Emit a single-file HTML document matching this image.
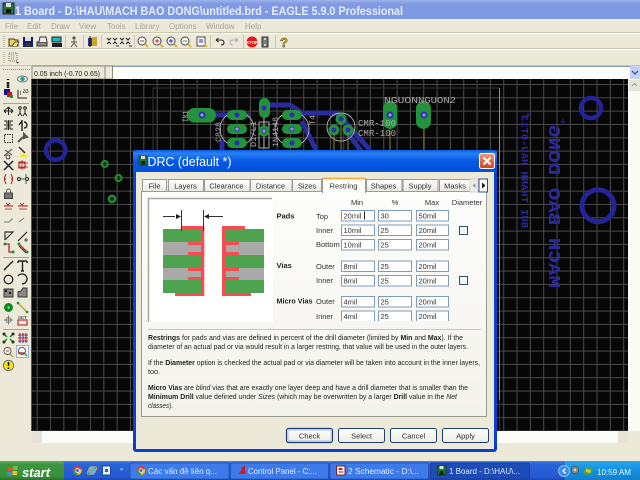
<!DOCTYPE html>
<html><head><meta charset="utf-8"><title>EAGLE DRC</title>
<style>html,body{margin:0;padding:0;width:640px;height:480px;overflow:hidden;background:#ece9d8}svg{display:block;filter:blur(.25px)}
text{font-family:"Liberation Sans","Noto Sans CJK SC",sans-serif}</style></head><body>
<svg xmlns="http://www.w3.org/2000/svg" width="640" height="480" viewBox="0 0 640 480">
<defs>
<linearGradient id="tb" x1="0" y1="0" x2="0" y2="1"><stop offset="0" stop-color="#9db5ec"/><stop offset=".2" stop-color="#8199e2"/><stop offset="1" stop-color="#7d9ae2"/></linearGradient>
<linearGradient id="dt" x1="0" y1="0" x2="0" y2="1"><stop offset="0" stop-color="#0a5ce8"/><stop offset=".15" stop-color="#2a80f5"/><stop offset=".5" stop-color="#0658e4"/><stop offset="1" stop-color="#0350d8"/></linearGradient>
<linearGradient id="task" x1="0" y1="0" x2="0" y2="1"><stop offset="0" stop-color="#3f86ea"/><stop offset=".15" stop-color="#2a63d8"/><stop offset=".85" stop-color="#2459d0"/><stop offset="1" stop-color="#1c47ad"/></linearGradient>
<linearGradient id="tray" x1="0" y1="0" x2="0" y2="1"><stop offset="0" stop-color="#28a5ee"/><stop offset=".5" stop-color="#1490df"/><stop offset="1" stop-color="#1280cc"/></linearGradient>
<linearGradient id="start" x1="0" y1="0" x2="0" y2="1"><stop offset="0" stop-color="#5fae5c"/><stop offset=".2" stop-color="#3c943c"/><stop offset=".8" stop-color="#3a933c"/><stop offset="1" stop-color="#2b6e2d"/></linearGradient>
<linearGradient id="tabg" x1="0" y1="0" x2="0" y2="1"><stop offset="0" stop-color="#fff"/><stop offset="1" stop-color="#e8e7df"/></linearGradient>
<linearGradient id="panel" x1="0" y1="0" x2="0" y2="1"><stop offset="0" stop-color="#fdfdfb"/><stop offset="1" stop-color="#f3f2ec"/></linearGradient>
<linearGradient id="btn" x1="0" y1="0" x2="0" y2="1"><stop offset="0" stop-color="#fff"/><stop offset="1" stop-color="#ecebe3"/></linearGradient>
<linearGradient id="cl" x1="0" y1="0" x2="0" y2="1"><stop offset="0" stop-color="#ee9a7c"/><stop offset="1" stop-color="#d2421a"/></linearGradient>
<pattern id="grid" width="13.33" height="13.33" patternUnits="userSpaceOnUse" x="10" y="4">
<rect width="13.33" height="13.33" fill="#070707"/><path d="M0 .5H13.33M.5 0V13.33" stroke="#4a4a4a" stroke-width="1" fill="none"/></pattern>
<clipPath id="cv"><rect x="31" y="79" width="597" height="352"/></clipPath>
<clipPath id="fc"><rect x="142" y="195" width="345" height="126"/></clipPath>
</defs>

<rect width="640" height="480" fill="#ece9d8"/>
<!-- main title -->
<rect width="640" height="19" fill="url(#tb)"/>
<rect x="3" y="3" width="11" height="11" fill="#1f7a2c" stroke="#222"/><rect x="6" y="3" width="5" height="4" fill="#ddd"/><rect x="6" y="9" width="5" height="4" fill="#111"/>
<text x="15" y="15" font-size="11.5" font-weight="bold" fill="#e4ebfa" textLength="388" lengthAdjust="spacingAndGlyphs">1 Board - D:\HAU\MACH BAO DONG\untitled.brd - EAGLE 5.9.0 Professional</text>
<!-- menu -->
<g font-size="8" fill="#a8a598">
<text x="5" y="29">File</text><text x="27" y="29">Edit</text><text x="51" y="29">Draw</text><text x="79" y="29">View</text><text x="107" y="29">Tools</text><text x="135" y="29">Library</text><text x="169" y="29">Options</text><text x="206" y="29">Window</text><text x="245" y="29">Help</text>
</g>
<path d="M0 33.500H640M0 49.500H640" stroke="#fff"/><path d="M0 32.500H640M0 48.500H640M0 65.500H640" stroke="#c9c6b4"/>
<!-- toolbar icons -->
<g>
<path d="M4 36v11M4 52v11" stroke="#99967f" stroke-dasharray="1 1"/>
<path d="M9 39h5l1 1h3v6H9z" fill="#e8d050" stroke="#333"/><path d="M12 46l3-4h4l-2 4" fill="#f5e878" stroke="#333" stroke-width=".7"/>
<rect x="23" y="37" width="10" height="10" fill="#101c70"/><rect x="25" y="37" width="6" height="4" fill="#ddd"/><rect x="25" y="43" width="6" height="4" fill="#333"/>
<path d="M37 42h10v4H37z" fill="#888" stroke="#333"/><path d="M39 42l1-5h6l1 5" fill="#eee" stroke="#333"/>
<rect x="52" y="37" width="9" height="5" fill="#19b8c8" stroke="#222"/><rect x="52" y="43" width="10" height="4" fill="#222"/>
<path d="M65.500 35v14" stroke="#c9c6b4"/>
<circle cx="74" cy="38" r="1.600" fill="#555"/><path d="M74 40v3l-3 4M74 43l3 4M71 42h6" stroke="#555" fill="none"/>
<path d="M83.500 35v14M101.500 35v14" stroke="#c9c6b4"/>
<rect x="88" y="38" width="9" height="8" fill="#2a3a9a"/><rect x="92" y="37" width="5" height="9" fill="#caa520"/><path d="M90 36v11" stroke="#111"/>
<g fill="none" stroke="#222"><path d="M107 38l2 2 2-2M113 38l2 2 2-2M107 44l2-2 2 2M113 44l2-2 2 2" /><path d="M120 38l2 2 2-2M126 38l2 2 2-2M120 44l2-2 2 2M126 44l2-2 2 2"/></g>
<path d="M116 46h3M129 46h3" stroke="#333"/>
<path d="M134.500 35v14" stroke="#c9c6b4"/>
<g fill="#fff" stroke="#444"><circle cx="142" cy="41" r="4"/><circle cx="157" cy="41" r="4"/><circle cx="171" cy="41" r="4"/><circle cx="185" cy="41" r="4"/><rect x="197" y="37" width="8" height="9"/></g>
<g stroke="#d8b440" stroke-width="2"><path d="M145 44l3 3M160 44l3 3M174 44l3 3M188 44l3 3M204 44l3 3"/></g>
<path d="M140 41h4M155 41h4M157 39v4" stroke="#c22"/><path d="M169 41h4M171 39v4" stroke="#22c"/><path d="M183 41h4" stroke="#2a2"/><path d="M199 40h4M199 42h4" stroke="#22a"/>
<path d="M210.500 35v14M243.500 35v14M275.500 35v14" stroke="#c9c6b4"/>
<path d="M216 40h5q3 0 3 2.500t-3 2.500M216 40l2.500-2M216 40l2.500 2" stroke="#222" fill="none"/>
<path d="M238 40h-5q-3 0-3 2.500t3 2.500M238 40l-2.500-2M238 40l-2.500 2" stroke="#aaa" fill="none"/>
<circle cx="252" cy="42" r="5.500" fill="#e01818"/><text x="252" y="44" font-size="4.500" font-weight="bold" fill="#fff" text-anchor="middle">STOP</text>
<rect x="262" y="37" width="6" height="10" fill="#777" stroke="#333"/><circle cx="265" cy="39" r="1" fill="#eee"/><circle cx="265" cy="42" r="1" fill="#4b4"/><circle cx="265" cy="45" r="1" fill="#eee"/>
<text x="284" y="47" font-size="13" font-weight="bold" fill="#e0c000" stroke="#222" stroke-width=".4" text-anchor="middle">?</text>
<rect x="9" y="53" width="8" height="8" fill="none" stroke="#666" stroke-dasharray="1 1"/><path d="M11 55h4M11 57h4M11 59h4" stroke="#888" stroke-dasharray="1 1"/><path d="M16 62h3l-1.500 1.500z" fill="#222"/>
</g>
<!-- coordinate row -->
<path d="M3 69.500h27" stroke="#99967f" stroke-dasharray="1 1"/>
<rect x="32" y="66" width="73" height="13" fill="#ece9d8" stroke="#8e8b78"/>
<text x="34" y="76" font-size="7.500" fill="#222" textLength="66" lengthAdjust="spacingAndGlyphs">0.05 inch (-0.70 0.65)</text>
<rect x="105" y="66" width="7.500" height="13" fill="#ece9d8" stroke="#8e8b78"/>
<rect x="113" y="66" width="517" height="13" fill="#fff"/><path d="M113 66.500H630" stroke="#7f9db9"/>
<rect x="630" y="66" width="10" height="13" fill="#c3d2f5"/><path d="M632 71l3 3 3-3" stroke="#3a5aa0" fill="none" stroke-width="1.300"/>

<!-- canvas -->
<rect x="31" y="79" width="597" height="352" fill="url(#grid)"/>
<g clip-path="url(#cv)">
<rect x="153" y="88" width="346.500" height="400" fill="none" stroke="#333"/><path d="M499.500 88V400" stroke="#8e8e8e"/>
<!-- traces -->
<g fill="none" stroke="#2b2b9c" stroke-width="5" stroke-linejoin="round">
<path d="M202 115H250"/><path d="M264 108L270 105H290L302 113H337L370 150"/><path d="M302 121L316 150"/><path d="M222 140V152"/><path d="M345 130L362 152"/>
</g>
<!-- mounting circles -->
<g fill="none" stroke="#24249a"><circle cx="55.700" cy="150" r="9.700" stroke-width="4.500"/><circle cx="591" cy="108" r="10" stroke-width="4.500"/><circle cx="598" cy="205.700" r="16" stroke-width="5"/></g>
<g fill="none" stroke="#1f8a2c"><circle cx="104.700" cy="164" r="3" stroke-width="2.200"/><circle cx="118.500" cy="178" r="3" stroke-width="2.200"/><circle cx="112" cy="199" r="3" stroke-width="2.800"/></g>
<!-- outlines -->
<g fill="none" stroke="#b8b8b8" stroke-width=".9"><circle cx="237" cy="129" r="17"/><circle cx="292" cy="129" r="17"/><circle cx="341" cy="127" r="14"/><rect x="259" y="122" width="10" height="26"/><path d="M264 112v36"/></g>
<g stroke="#8a8140"><path d="M334 134V152M348 134V152M424 128V152M390 128V152M341 122V152" fill="none"/></g>
<!-- pads -->
<g fill="#23923a">
<rect x="187" y="108" width="29" height="14.600" rx="7.300"/>
<rect x="227" y="110" width="20" height="10" rx="5"/><rect x="227" y="124" width="20" height="10" rx="5"/><rect x="227" y="138" width="20" height="10" rx="5"/>
<rect x="282" y="110" width="20" height="10" rx="5"/><rect x="282" y="124" width="20" height="10" rx="5"/><rect x="282" y="138" width="20" height="10" rx="5"/>
<rect x="259" y="98" width="11" height="20" rx="5.500"/><circle cx="264" cy="131" r="5.500"/>
<circle cx="341" cy="119" r="5.500"/><circle cx="334" cy="130" r="5.500"/><circle cx="348" cy="130" r="5.500"/>
<rect x="383" y="101" width="14" height="28" rx="7"/><rect x="416" y="101" width="15" height="28" rx="7.500"/>
</g>
<g fill="#2c2cb8"><circle cx="202" cy="115" r="3.500"/><circle cx="237" cy="115" r="2.500"/><circle cx="237" cy="129" r="2.500"/><circle cx="237" cy="143" r="2.500"/><circle cx="292" cy="115" r="2.500"/><circle cx="292" cy="129" r="2.500"/><circle cx="292" cy="143" r="2.500"/><circle cx="264" cy="108" r="2.500"/><circle cx="264" cy="131" r="2.500"/><circle cx="341" cy="119" r="2.500"/><circle cx="334" cy="130" r="2.500"/><circle cx="348" cy="130" r="2.500"/><circle cx="390" cy="115" r="3.500"/><circle cx="424" cy="115" r="3.500"/></g>
<path d="M200 115h4M202 113v4M235 129h4M237 127v4M290 129h4M292 127v4M388 115h4M390 113v4M422 115h4M424 113v4M262 131h4M264 129v4" stroke="#ddd" stroke-width=".7"/>
<!-- pcb text -->
<g fill="#a8a8a8" font-size="9">
<text x="384" y="103" textLength="34" lengthAdjust="spacingAndGlyphs" style="font-family:'Liberation Mono',monospace">NGUON</text>
<text x="418" y="103" textLength="38" lengthAdjust="spacingAndGlyphs" style="font-family:'Liberation Mono',monospace">NGUON2</text>
<text x="358" y="126" textLength="38" lengthAdjust="spacingAndGlyphs" style="font-family:'Liberation Mono',monospace">CMR-100</text>
<text x="358" y="136" textLength="38" lengthAdjust="spacingAndGlyphs" style="font-family:'Liberation Mono',monospace">CMR-100</text>
<text transform="translate(188,122) rotate(-90)" font-size="8" textLength="11" lengthAdjust="spacingAndGlyphs" style="font-family:'Liberation Mono',monospace">IN1</text>
<text transform="translate(221,142) rotate(-90)" font-size="8" textLength="20" lengthAdjust="spacingAndGlyphs" style="font-family:'Liberation Mono',monospace">C828</text>
<text transform="translate(256,147) rotate(-90)" font-size="8" textLength="26" lengthAdjust="spacingAndGlyphs" style="font-family:'Liberation Mono',monospace">D1/L1</text>
<text transform="translate(278,147) rotate(-90)" font-size="8" textLength="30" lengthAdjust="spacingAndGlyphs" style="font-family:'Liberation Mono',monospace">1N4148</text>
<text transform="translate(315,125) rotate(-90)" font-size="8" textLength="10" lengthAdjust="spacingAndGlyphs" style="font-family:'Liberation Mono',monospace">T4</text>
</g>
<g fill="#2a2a9c" font-weight="bold">
<text transform="translate(549,288) rotate(-90) scale(1,-1)" font-size="17" textLength="163" lengthAdjust="spacingAndGlyphs" style="font-family:'Liberation Mono',monospace">MACH BAO DONG</text>
<text transform="translate(521.500,228) rotate(-90) scale(1,-1)" font-size="10" textLength="113" lengthAdjust="spacingAndGlyphs" style="font-family:'Liberation Mono',monospace">BUI THANH HAU-0T13</text>
</g>
<path d="M528 112v6M525 115h6M563 119v6M560 122h6" stroke="#2a2a9c" stroke-width=".7"/>
</g>
<!-- left toolbar -->
<rect x="0" y="66" width="31" height="395" fill="#ece9d8"/><rect x="31" y="79" width="1" height="352" fill="#555"/>
<path d="M3 69.500h27" stroke="#99967f" stroke-dasharray="1 1"/>
<path d="M3 103.500h26M3 257.500h26M3 329.500h26" stroke="#a9a692"/>
<g fill="none" stroke="#222" stroke-width="1">
<path d="M8 79v1M8 82v6" stroke-width="2.500"/>
<ellipse cx="22.500" cy="79" rx="5" ry="3" stroke="#777"/><circle cx="22.500" cy="79" r="1.700" fill="#14a8a0" stroke="#14a8a0"/>
<rect x="4" y="89" width="6" height="6" fill="#101090" stroke="none"/><rect x="7" y="92" width="5" height="5" fill="#c01818" stroke="none"/><rect x="10" y="95" width="3" height="3" fill="#189028" stroke="none"/>
<path d="M18 90v8h9M20 92h1M23 92h1M20 94h1" /><text x="23" y="93" font-size="5" fill="#222" stroke="none">33</text>
<path d="M4 111h9M8.500 107v8M4 111l2-2M4 111l2 2M13 111l-2-2M13 111l-2 2M8.500 107l-2 2M8.500 107l2 2"/>
<circle cx="20" cy="108" r="1.300"/><circle cx="25" cy="108" r="1.300"/><path d="M20 110v3l-2 3M20 113l2 3M25 110v3l-2 3M25 113l2 3"/>
<path d="M4 121h3v8H4M4 125h2M13 121h-3v8h3M13 125h-2M8.500 120v10"/>
<path d="M22 120v11M19 125l3-4M24 122a3 3 0 0 1 0 6" stroke-width="1.400"/>
<rect x="4.500" y="134.500" width="8" height="8" stroke-dasharray="1.500 1"/>
<path d="M18 142l5-5M24 134l3 3-3 1z" stroke-width="2" stroke="#555"/>
<path d="M4 156l8-7M5 150l7 5M6 157a2 2 0 1 0 0-.1" stroke="#444"/>
<path d="M19 147l6 6" stroke="#333" stroke-width="1.500"/><path d="M19 157h9l-4-4z" fill="#f5e030" stroke="none"/>
<path d="M4 161l9 9M13 161l-9 9" stroke-width="1.500"/>
<rect x="19" y="162" width="6" height="6" stroke="#b01818"/><path d="M18 163h10M18 167h10M22 160v10" stroke="#b01818" stroke-width=".7"/>
<path d="M6 174q-3 5 0 10M11 174q3 5 0 10M4 179h2M11 179h2" stroke="#a01818"/>
<circle cx="19" cy="179" r="1.500"/><circle cx="27" cy="179" r="1.500"/><path d="M20 179h6M26 174v4M26 180v4" stroke="#1a7a2a"/>
<rect x="4.500" y="193" width="8" height="5.500" fill="#777" stroke="#444"/><path d="M6.500 193v-2a2 2 0 0 1 4 0v2" stroke="#666"/>
<path d="M4 206h9M18 206h10" stroke="#a01818"/><path d="M6 203l2 2 2-2M20 203l2 2 2-2M5 209h7M19 209h8" stroke="#a01818" stroke-width=".8"/>
<path d="M4 222h5l3-3h1M19 222l5-4" stroke="#777"/>
<path d="M5 240v-8h8L5 240" stroke-width="1.200" stroke="#333"/><path d="M18 241l9-9" stroke-width="1.200"/><path d="M26 238v4M24 240h4" stroke-width=".8"/>
<path d="M5 244h4v8l5 0" stroke="#d02020" stroke-width="1.300"/><circle cx="5" cy="244" r="1.500" fill="#1a9030" stroke="none"/><circle cx="13" cy="252" r="1.500" fill="#1a9030" stroke="none"/>
<path d="M19 244l8 8" stroke="#d02020" stroke-width="1.300"/><path d="M19 246l7 7" stroke="#333"/><circle cx="19" cy="244" r="1.500" fill="#1a9030" stroke="none"/><circle cx="27" cy="252" r="1.500" fill="#1a9030" stroke="none"/>
<path d="M4 270l9-9" stroke-width="1.400"/>
<path d="M18 261h9M22.500 261v10M21 271h3M18 261v2M27 261v2" stroke-width="1.400"/>
<circle cx="8.500" cy="279.500" r="4.300" stroke-width="1.300"/>
<path d="M18 276a5 5 0 1 1 4 8" stroke-width="1.300"/>
<rect x="4" y="289" width="9" height="8" fill="#8a8a8a" stroke="#333"/><circle cx="6" cy="291" r=".7" fill="#222"/><circle cx="10" cy="293" r=".7" fill="#222"/>
<path d="M18 297v-5l3-1 2-3h4v9z" fill="#888" stroke="#333"/>
<circle cx="8.500" cy="307.500" r="4.500" fill="#0a8a1e" stroke="none"/><circle cx="8.500" cy="307.500" r="1" fill="#dfd" stroke="none"/>
<path d="M18 303l9 9" stroke="#c0a020" stroke-width="1.300"/><circle cx="18" cy="303" r="1.300" fill="#1a9030" stroke="none"/><circle cx="27" cy="312" r="1.300" fill="#1a9030" stroke="none"/>
<circle cx="8.500" cy="320" r="2.500" stroke="#777"/><path d="M4 320h9M8.500 315.500v9" stroke="#777"/>
<rect x="18" y="320" width="9" height="5" stroke="#a01818"/><text x="18" y="319" font-size="4.500" fill="#222" stroke="none">SET</text>
<path d="M4 334l3 3M13 334l-3 3M4 342l3-3M13 342l-3-3" stroke="#14902a" stroke-width="1.500"/><circle cx="4" cy="334" r="1" fill="#14902a"/><circle cx="13" cy="342" r="1" fill="#14902a"/><circle cx="13" cy="334" r="1" fill="#14902a"/><circle cx="4" cy="342" r="1" fill="#14902a"/>
<path d="M20 333v10M23 333v10M26 333v10" stroke="#2030b0"/><path d="M18 335h10M18 338h10M18 341h10" stroke="#c02020"/>
<circle cx="7.500" cy="351" r="3.500" fill="#fff" stroke="#555"/><path d="M10 354l3 3" stroke="#c0a040" stroke-width="1.500"/><path d="M6 351h3" stroke="#c22"/>
<rect x="16.500" y="345.500" width="12" height="12" fill="#f7f6ef" stroke="#9db0d8"/><circle cx="22" cy="351" r="3.500" fill="#fff" stroke="#555"/><path d="M18 353h7" stroke="#a01818" stroke-width="1.200"/><path d="M25 354l2 2" stroke="#3a9a3a" stroke-width="1.500"/>
<circle cx="8.500" cy="365.500" r="5.200" fill="#f0e020" stroke="#666" stroke-width=".8"/><path d="M8.500 362v4M8.500 367.500v1.500" stroke="#111" stroke-width="1.500"/>
</g>
<!-- right scrollbar -->
<rect x="628" y="79" width="12" height="352" fill="#fafaf6"/>
<rect x="629" y="80" width="11" height="11" fill="#e6e4d6"/><path d="M632 86l2.500-2.500 2.500 2.500" stroke="#9c9c92" fill="none"/>
<rect x="628" y="431" width="12" height="12" fill="#ece9d8"/>
<!-- bottom scrollbar -->
<rect x="32" y="431" width="596" height="12" fill="#fbfbf8"/>
<rect x="32" y="431" width="10" height="12" fill="#e6e4d6"/><rect x="618" y="431" width="10" height="12" fill="#e6e4d6"/>
<rect x="32" y="443" width="608" height="18" fill="#ece9d8"/>

<!-- dialog -->
<rect x="133" y="150" width="364" height="302" rx="3" fill="#0a3fd4"/>
<rect x="133" y="150" width="364" height="23" rx="3" fill="url(#dt)"/>
<rect x="136" y="172" width="358" height="277" fill="#ece9d8"/>
<rect x="139" y="156" width="8" height="9" fill="#1a7a2a" stroke="#222" stroke-width=".6"/><rect x="141" y="156" width="4" height="3" fill="#ddd"/><rect x="141" y="161" width="4" height="4" fill="#222"/>
<text x="147.500" y="166" font-size="12.500" fill="#fff" textLength="84" lengthAdjust="spacingAndGlyphs">DRC (default *)</text>
<rect x="479.500" y="153.500" width="15" height="15" rx="2" fill="url(#cl)" stroke="#fff"/><path d="M483.500 157.500l7 7M490.500 157.500l-7 7" stroke="#fff" stroke-width="2"/>
<!-- panel -->
<rect x="141.500" y="191.500" width="345" height="225" fill="url(#panel)" stroke="#9c9b91"/>
<!-- tabs -->
<g fill="url(#tabg)" stroke="#9c9b91">
<rect x="142.500" y="179.500" width="24" height="12"/><rect x="168.500" y="179.500" width="35" height="12"/><rect x="204.500" y="179.500" width="45.500" height="12"/><rect x="250.500" y="179.500" width="41.500" height="12"/><rect x="292.500" y="179.500" width="29" height="12"/><rect x="366.500" y="179.500" width="35.500" height="12"/><rect x="403" y="179.500" width="35" height="12"/><rect x="439.500" y="179.500" width="31" height="12"/>
</g>
<rect x="322.500" y="178.500" width="43" height="14" fill="#fdfdfb" stroke="#9c9b91"/><path d="M323 178.500h42" stroke="#f0a830" stroke-width="1.600"/><path d="M323 192.500h42" stroke="#fdfdfb" stroke-width="1.500"/>
<g font-size="7.500" fill="#333" text-anchor="middle">
<text x="154.500" y="188.500">File</text><text x="185.500" y="188.500">Layers</text><text x="226.500" y="188.500">Clearance</text><text x="270.500" y="188.500">Distance</text><text x="307" y="188.500">Sizes</text><text x="343.500" y="188.500">Restring</text><text x="383.500" y="188.500">Shapes</text><text x="420" y="188.500">Supply</text><text x="455" y="188.500">Masks</text>
</g>
<rect x="470" y="179" width="8" height="13" fill="#eeede6" stroke="#c8c7bd" stroke-width=".7"/><path d="M475.500 183v5l-3-2.500z" fill="#999"/>
<rect x="479" y="179" width="8.500" height="13" fill="#fff" stroke="#24509a"/><path d="M482 182.500v6l3.500-3z" fill="#111"/>
<!-- image -->
<rect x="148" y="198" width="125" height="124" fill="#fff"/><path d="M148.500 322V198.500H272" fill="none" stroke="#aaa89e" stroke-width="1.500"/>
<g fill="#4ea34e"><rect x="163" y="229" width="38" height="13"/><rect x="163" y="255" width="38" height="13"/><rect x="163" y="280" width="38" height="13"/><rect x="226" y="229" width="38" height="13"/><rect x="226" y="255" width="38" height="13"/><rect x="226" y="280" width="38" height="13"/></g>
<g fill="#a9a9a9"><rect x="163" y="242" width="38" height="13"/><rect x="163" y="268" width="38" height="12"/><rect x="226" y="242" width="38" height="13"/><rect x="226" y="268" width="38" height="12"/></g>
<g fill="#f84c50">
<rect x="201" y="226" width="3.300" height="70"/><rect x="182" y="226" width="22" height="3"/><rect x="175" y="293" width="29" height="3"/>
<rect x="188" y="242" width="13" height="3"/><rect x="188" y="252" width="13" height="3"/><rect x="188" y="268" width="13" height="3"/><rect x="188" y="277" width="13" height="3"/>
<rect x="222" y="226" width="4" height="70"/><rect x="222" y="226" width="23" height="3"/><rect x="222" y="293" width="29" height="3"/>
<rect x="226" y="242" width="13" height="3"/><rect x="226" y="252" width="13" height="3"/><rect x="226" y="268" width="13" height="3"/><rect x="226" y="277" width="13" height="3"/>
</g>
<path d="M181.500 210v21M203.500 210v21M163 216.500h12M209 216.500h14" stroke="#333" fill="none"/>
<path d="M176 214v5l5-2.500zM209 214v5l-5-2.500z" fill="#222"/>
<!-- labels -->
<g font-size="7.500" font-weight="bold" fill="#222"><text x="276.500" y="218.500">Pads</text><text x="276.500" y="268">Vias</text><text x="276.500" y="303.500" textLength="36" lengthAdjust="spacingAndGlyphs">Micro Vias</text></g>
<g font-size="7.500" fill="#333" text-anchor="middle"><text x="357" y="205">Min</text><text x="395" y="205">%</text><text x="432" y="205">Max</text><text x="467" y="205">Diameter</text></g>
<g clip-path="url(#fc)">
<g font-size="7.500" fill="#333">
<text x="316" y="219">Top</text><text x="316" y="233">Inner</text><text x="316" y="247">Bottom</text><text x="316" y="269">Outer</text><text x="316" y="283">Inner</text><text x="316" y="304">Outer</text><text x="316" y="319">Inner</text></g>
<g fill="#fff" stroke="#7f9db9">
<rect x="341.500" y="210.500" width="33" height="10.500"/><rect x="378.500" y="210.500" width="33" height="10.500"/><rect x="416.500" y="210.500" width="32" height="10.500"/>
<rect x="341.500" y="225" width="33" height="10.500"/><rect x="378.500" y="225" width="33" height="10.500"/><rect x="416.500" y="225" width="32" height="10.500"/>
<rect x="341.500" y="239.500" width="33" height="10.500"/><rect x="378.500" y="239.500" width="33" height="10.500"/><rect x="416.500" y="239.500" width="32" height="10.500"/>
<rect x="341.500" y="261" width="33" height="10.500"/><rect x="378.500" y="261" width="33" height="10.500"/><rect x="416.500" y="261" width="32" height="10.500"/>
<rect x="341.500" y="275.500" width="33" height="10.500"/><rect x="378.500" y="275.500" width="33" height="10.500"/><rect x="416.500" y="275.500" width="32" height="10.500"/>
<rect x="341.500" y="296.500" width="33" height="10.500"/><rect x="378.500" y="296.500" width="33" height="10.500"/><rect x="416.500" y="296.500" width="32" height="10.500"/>
<rect x="341.500" y="311" width="33" height="10.500"/><rect x="378.500" y="311" width="33" height="10.500"/><rect x="416.500" y="311" width="32" height="10.500"/>
</g>
<g font-size="7.500" fill="#333">
<text x="343.500" y="218.500">20mil</text><text x="380.500" y="218.500">30</text><text x="418.500" y="218.500">50mil</text>
<text x="343.500" y="233">10mil</text><text x="380.500" y="233">25</text><text x="418.500" y="233">20mil</text>
<text x="343.500" y="247.500">10mil</text><text x="380.500" y="247.500">25</text><text x="418.500" y="247.500">20mil</text>
<text x="343.500" y="269">8mil</text><text x="380.500" y="269">25</text><text x="418.500" y="269">20mil</text>
<text x="343.500" y="283.500">8mil</text><text x="380.500" y="283.500">25</text><text x="418.500" y="283.500">20mil</text>
<text x="343.500" y="304.500">4mil</text><text x="380.500" y="304.500">25</text><text x="418.500" y="304.500">20mil</text>
<text x="343.500" y="319">4mil</text><text x="380.500" y="319">25</text><text x="418.500" y="319">20mil</text>
</g>
<path d="M364.500 211.500v8" stroke="#222"/>
<rect x="459.500" y="226.500" width="8" height="8" fill="#f5f4ee" stroke="#2a4f85"/><rect x="459.500" y="276.500" width="8" height="8" fill="#f5f4ee" stroke="#2a4f85"/>
</g>
<path d="M148 329.500H481" stroke="#c8c7bd"/>
<!-- description -->
<g font-size="7" fill="#222">
<text x="148" y="340" textLength="315" lengthAdjust="spacingAndGlyphs"><tspan font-weight="bold">Restrings</tspan> for pads and vias are defined in percent of the drill diameter (limited by <tspan font-weight="bold">Min</tspan> and <tspan font-weight="bold">Max</tspan>). If the</text>
<text x="148" y="349" textLength="320" lengthAdjust="spacingAndGlyphs">diameter of an actual pad or via would result in a larger restring, that value will be used in the outer layers.</text>
<text x="148" y="365" textLength="332" lengthAdjust="spacingAndGlyphs">If the <tspan font-weight="bold">Diameter</tspan> option is checked the actual pad or via diameter will be taken into account in the inner layers,</text>
<text x="148" y="374" textLength="12" lengthAdjust="spacingAndGlyphs">too.</text>
<text x="148" y="390" textLength="320" lengthAdjust="spacingAndGlyphs"><tspan font-weight="bold">Micro Vias</tspan> are <tspan font-style="italic">blind</tspan> vias that are exactly one layer deep and have a drill diameter that is smaller than the</text>
<text x="148" y="399" textLength="309" lengthAdjust="spacingAndGlyphs"><tspan font-weight="bold">Minimum Drill</tspan> value defined under <tspan font-style="italic">Sizes</tspan> (which may be overwritten by a larger <tspan font-weight="bold">Drill</tspan> value in the <tspan font-style="italic">Net</tspan></text>
<text x="148" y="408" textLength="25" lengthAdjust="spacingAndGlyphs"><tspan font-style="italic">classes</tspan>).</text>
</g>
<!-- buttons -->
<g fill="url(#btn)" stroke="#1f3f72">
<rect x="286.500" y="428.500" width="46" height="14" rx="2" stroke-width="1.200"/><rect x="338.500" y="428.500" width="46" height="14" rx="2"/><rect x="390.500" y="428.500" width="46" height="14" rx="2"/><rect x="442.500" y="428.500" width="46" height="14" rx="2"/>
</g>
<rect x="288" y="430" width="43" height="11" rx="1" fill="none" stroke="#b0c4e8"/>
<g font-size="7.500" fill="#333" text-anchor="middle"><text x="309.500" y="438.500">Check</text><text x="361.500" y="438.500">Select</text><text x="413.500" y="438.500">Cancel</text><text x="465.500" y="438.500">Apply</text></g>

<!-- taskbar -->
<rect y="461" width="640" height="19" fill="url(#task)"/>
<path d="M0 461h61q3 0 3 3v16H0z" fill="url(#start)"/>
<g><rect x="8" y="467" width="4.500" height="4" fill="#e8542a"/><rect x="13" y="466" width="4.500" height="4" fill="#6cc04a"/><rect x="7.500" y="472" width="4.500" height="4" fill="#3a90e8"/><rect x="12.500" y="471" width="4.500" height="4" fill="#f0c020"/></g>
<text x="22" y="477" font-size="13" font-weight="bold" font-style="italic" fill="#fff" textLength="28" lengthAdjust="spacingAndGlyphs">start</text>
<g><circle cx="77.500" cy="470.500" r="4.500" fill="#d8402a"/><path d="M77.500 470.500L73 472a4.500 4.500 0 0 0 5 3z" fill="#3aa040"/><path d="M77.500 470.500l0 4.500a4.500 4.500 0 0 0 4-6z" fill="#f0c020"/><circle cx="77.500" cy="470.500" r="1.900" fill="#3a70e0" stroke="#fff" stroke-width=".7"/></g>
<ellipse cx="92" cy="470.500" rx="4" ry="4.500" fill="#5ab0f0"/><ellipse cx="92" cy="470.500" rx="5.500" ry="2.500" fill="none" stroke="#e8a020" transform="rotate(-35 92 470.500)"/>
<rect x="102.500" y="466" width="8" height="9" rx="1" fill="#e8f0ff" stroke="#204a9a"/><path d="M105 469h3v3h-3z" fill="#3060c0"/>
<text x="120" y="471" font-size="6" fill="#cfe0ff">»</text>
<g fill="#3d7bea" stroke="#1d49b0" stroke-width=".7"><rect x="130" y="463" width="99" height="16" rx="2"/><rect x="230.500" y="463" width="98" height="16" rx="2"/><rect x="330" y="463" width="98.500" height="16" rx="2"/></g>
<rect x="430.500" y="463" width="99" height="16" rx="2" fill="#1c4cb4" stroke="#16399a" stroke-width=".7"/>
<g><circle cx="141" cy="470.500" r="4.500" fill="#d8402a"/><path d="M141 470.500l-4.500 1.500a4.500 4.500 0 0 0 5 3z" fill="#3aa040"/><path d="M141 470.500v4.500a4.500 4.500 0 0 0 4-6z" fill="#f0c020"/><circle cx="141" cy="470.500" r="1.900" fill="#3a70e0" stroke="#fff" stroke-width=".7"/></g>
<path d="M238 474l3-3 1-4 3-1v5l1 3z" fill="#d81818"/>
<rect x="336.500" y="466" width="8.500" height="9" fill="#fff" stroke="#801818"/><rect x="338.500" y="468" width="4" height="2" fill="#c02020"/><path d="M338.500 472h5" stroke="#802020"/>
<rect x="437.500" y="466" width="8.500" height="9" fill="#1a7a2a" stroke="#0a2a10" stroke-width=".7"/><rect x="439.500" y="466" width="4" height="3" fill="#ddd"/><rect x="439.500" y="471" width="4" height="4" fill="#222"/>
<g font-size="8" fill="#dfe8ff">
<text x="148" y="474" textLength="69" lengthAdjust="spacingAndGlyphs">Các vấn đề liên q...</text>
<text x="248" y="474" textLength="69" lengthAdjust="spacingAndGlyphs">Control Panel - C:...</text>
<text x="348" y="474" textLength="71" lengthAdjust="spacingAndGlyphs">2 Schematic - D:\...</text>
<text x="449" y="474" textLength="71" lengthAdjust="spacingAndGlyphs">1 Board - D:\HAU\...</text>
</g>
<path d="M565 461H640V480H565z" fill="url(#tray)"/>
<circle cx="564" cy="471" r="5.500" fill="#3a8af0" stroke="#a8d0f8" stroke-width=".8"/><path d="M565.500 468.500l-2.500 2.500 2.500 2.500" fill="none" stroke="#fff" stroke-width="1.300"/>
<circle cx="575" cy="470" r="3.800" fill="#888" stroke="#444" stroke-width=".6"/><circle cx="575" cy="470" r="1.200" fill="#ddd"/>
<path d="M583 472l4-5 6 2-2 5-5 1z" fill="#4aa83a"/><path d="M586 469l5 1-1 3-4-1z" fill="#e8c030"/>
<text x="597" y="475" font-size="8" fill="#eef4ff" textLength="34" lengthAdjust="spacingAndGlyphs">10:59 AM</text>
</svg>
</body></html>
